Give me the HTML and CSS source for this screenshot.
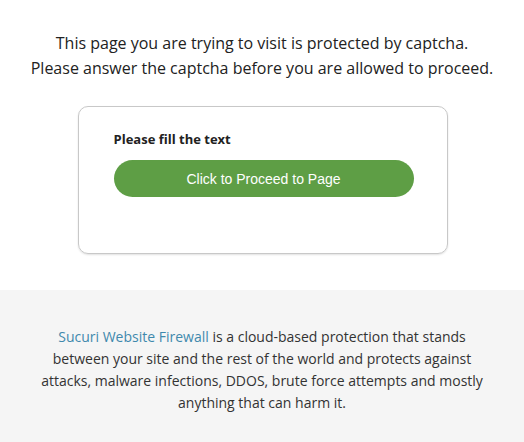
FILE: index.html
```html
<!DOCTYPE html>
<html>
<head>
<meta charset="utf-8">
<link rel="stylesheet" href="styles.css">
</head>
<body>
<div class="main">
  <p class="intro">This page you are trying to visit is protected by captcha.<br>Please answer the captcha before you are allowed to proceed.</p>
  <div class="box">
    <div class="label">Please fill the text</div>
    <button class="btn">Click to Proceed to Page</button>
  </div>
</div>
<div class="footer">
  <p><a href="#">Sucuri Website Firewall</a> is a cloud-based protection that stands between your site and the rest of the world and protects against attacks, malware infections, DDOS, brute force attempts and mostly anything that can harm it.</p>
</div>
</body>
</html>
```
FILE: styles.css
```css
html, body {
  margin: 0;
  padding: 0;
  background: #fff;
  font-family: "Open Sans", sans-serif;
  color: #222;
}
.main {
  padding-top: 31px;
  height: 259px;
  display: flex;
  flex-direction: column;
  align-items: center;
}
.intro {
  margin: 0;
  font-size: 16px;
  line-height: 25px;
  text-align: center;
}
.box {
  margin-top: 25px;
  margin-left: 1px;
  width: 333px;
  height: 146px;
  border: 1px solid #c8c8c8;
  border-radius: 10px;
  box-shadow: 0 1px 2px rgba(0,0,0,0.12);
  padding: 0 0 0 35px;
  box-sizing: content-box;
}
.label {
  margin-top: 23px;
  font-size: 13px;
  font-weight: bold;
  line-height: 18px;
}
.btn {
  display: block;
  margin-top: 12px;
  width: 300px;
  height: 37px;
  border: none;
  border-radius: 19px;
  background: #5e9e45;
  color: #fff;
  font-family: "Liberation Sans", Arial, sans-serif;
  font-size: 14px;
  padding: 0;
}
.footer {
  background: #f5f5f5;
  padding: 36px 0 40px;
  height: 152px;
  box-sizing: border-box;
}
.footer p {
  margin: 0 auto;
  max-width: 448px;
  font-size: 14px;
  line-height: 22px;
  text-align: center;
  color: #333;
}
.footer a {
  color: #3f89ad;
  text-decoration: none;
}
```
